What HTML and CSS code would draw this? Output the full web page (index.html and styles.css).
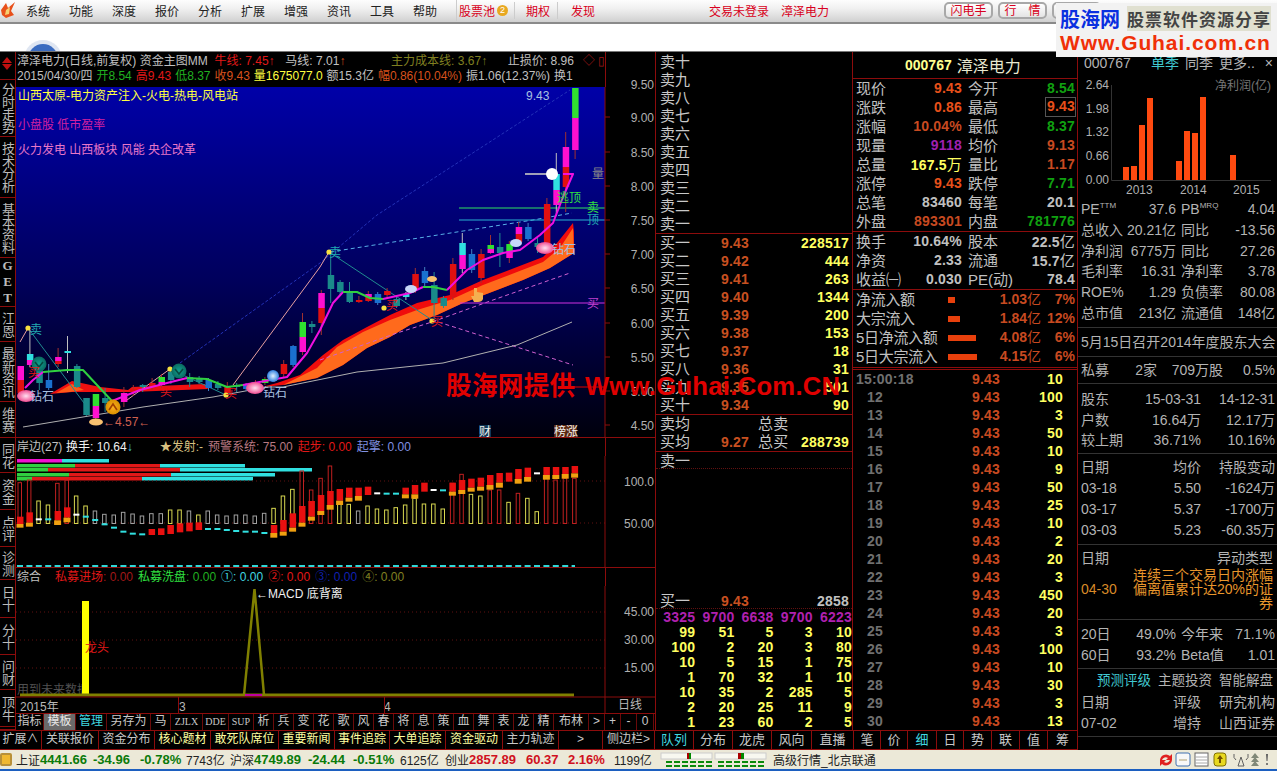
FILE: index.html
```html
<!DOCTYPE html>
<html lang="zh-CN">
<head>
  <meta charset="UTF-8">
  <title>漳泽电力 000767</title>
  <link rel="stylesheet" href="styles.css">
</head>
<body>
<div class="app">

  <div class="menu">
    <svg class="menu-logo" width="16" height="18" viewBox="0 0 16 18"><path d="M1 9 L6 2 L8 7 L15 1 L11 10 L14 14 L6 17 L2 14 Z" fill="#e8501a"/><path d="M6 9 L10 6 L9 13 L5 14 Z" fill="#f8d070"/></svg>
    <div class="menu-items">
      <span>系统</span><span>功能</span><span>深度</span><span>报价</span><span>分析</span><span>扩展</span><span>增强</span><span>资讯</span><span>工具</span><span>帮助</span>
    </div>
    <div class="menu-red">
      <span class="pool">股票池<i class="badge">2</i></span>
      <span class="m1">期权</span>
      <span class="m2">发现</span>
    </div>
    <div class="menu-login"><span>交易未登录</span><span>漳泽电力</span></div>
    <div class="menu-btns"><b>闪电手</b><b>行　情</b><b></b></div>
  </div>

  <div class="toolbar">
    <svg class="globe" width="40" height="11" viewBox="0 0 40 11"><circle cx="20" cy="19" r="19" fill="#dfe6f2"/><circle cx="20" cy="19" r="15" fill="#3b6cc0"/></svg>
  </div>

  <div class="main">
    <div class="left">
      <div class="side">
        <div class="side-top"><i class="up"></i><i class="down"></i></div>
        <div>分时走势</div><div>技术分析</div><div>基本资料</div><div class="get">GET</div><div>江恩</div><div>最新资讯</div><div>维赛</div><div>同花</div><div>资金</div><div>点评</div><div>诊测</div><div>日十</div><div>分十</div><div>问财</div><div>顶牛</div><div></div>
      </div>

      <div class="charts">
        <div class="price-head">
          <div class="head-line">
            <span class="w170">漳泽电力(日线,前复权) 资金主图MM</span>
            <span class="c-red g-a">牛线: 7.45<em>↑</em></span>
            <span class="g-b">马线: 7.01<em class="c-org">↑</em></span>
            <span class="c-olive g-c">主力成本线: 3.67<em>↑</em></span>
            <span class="g-d">止损价: 8.96</span>
            <span class="c-dred g-e">◇ ▯</span>
          </div>
          <div class="head-line line2">
            <span>2015/04/30/四</span>
            <span class="c-green">开8.54</span>
            <span class="c-red">高9.43</span>
            <span class="c-green">低8.37</span>
            <span class="c-org">收9.43</span>
            <span class="c-yel">量1675077.0</span>
            <span>额15.3亿</span>
            <span class="c-org">幅0.86(10.04%)</span>
            <span>振1.06(12.37%)</span>
            <span>换1</span>
          </div>
        </div>

        <svg class="chart price" width="639" height="351" viewBox="16 87 639 351">
          <defs>
            <linearGradient id="sky" x1="0" y1="0" x2="0" y2="1"><stop offset="0" stop-color="#0000a8"/><stop offset=".55" stop-color="#00005c"/><stop offset="1" stop-color="#00000c"/></linearGradient>
            <radialGradient id="gemFill"><stop offset="0" stop-color="#ffe0f0"/><stop offset="1" stop-color="#f04a90"/></radialGradient>
            <radialGradient id="gold"><stop offset="0" stop-color="#ffb020"/><stop offset="1" stop-color="#d89000"/></radialGradient>
            <radialGradient id="tealBall"><stop offset="0" stop-color="#10a090"/><stop offset="1" stop-color="#0a6a60"/></radialGradient>
            <radialGradient id="blueBall"><stop offset="0" stop-color="#e0f0ff"/><stop offset="1" stop-color="#3080e0"/></radialGradient>
            <symbol id="gem" width="18" height="12" viewBox="0 0 18 12" overflow="visible"><ellipse cx="9" cy="5" rx="9" ry="6" fill="url(#gemFill)"/></symbol>
            <symbol id="mark" width="6" height="6" viewBox="0 0 6 6"><circle cx="3" cy="3" r="2.6" fill="#f8e040"/></symbol>
          </defs>
          <rect x="16" y="87" width="589" height="350" fill="url(#sky)"/>
          <g class="ribbons">
            <path fill="#f01010" d="M50 394 L72 381 L100 387 L128 390 L132 387 L205 384 L208 389 L130 392 L95 392 L72 392 Z"/>
            <path fill="#ff5a18" d="M56 393 L72 384 L84 390 L70 392 Z"/>
          </g>
          <path fill="#f00c0c" d="M262 387 L277 383 L300 375 L323 355 L343 340 L367 327 L390 315 L417 303 L450 295 L483 280 L517 267 L543 257 L557 243 L573 223 L574 232 L574 253 L550 268 L523 280 L497 290 L463 303 L437 315 L410 325 L390 337 L367 348 L343 365 L317 378 L283 385 Z"/>
          <path fill="#ff6a1c" d="M287 383 L317 368 L337 347 L363 332 L390 320 L417 310 L450 300 L483 285 L517 272 L543 262 L560 248 L573 228 L574 253 L550 268 L523 280 L497 290 L463 303 L437 315 L410 325 L390 337 L367 348 L343 365 L317 378 L283 385 Z"/>

          <g fill="none" stroke-width="1">
            <polyline stroke="#2432b8" stroke-dasharray="3 2" points="180,363 320,263 377,215 570,90"/>
            <polyline stroke="#e8a0a0" points="233,385 320,267 329,252"/>
            <polyline stroke="#e8a0a0" points="20,342 28,328"/>
            <polyline stroke="#e8a0a0" points="127,400 170,369"/>
            <polyline stroke="#58b0e8" stroke-dasharray="4 3" points="330,252 533,220 572,213"/>
            <polyline stroke="#208c90" points="28,328 87,407"/>
            <polyline stroke="#208c90" points="170,369 226,395"/>
            <polyline stroke="#208c90" points="329,252 432,320"/>
            <polyline stroke="#d060d0" stroke-dasharray="4 3" points="432,320 573,365"/>
            <polyline stroke="#d060d0" stroke-dasharray="4 3" points="320,360 397,333 432,322 493,300 570,273"/>
            <polyline stroke="#b0b0b0" points="23,427 83,417 143,407 213,397 267,387 283,387 357,372 443,363 517,345 572,322"/>
            <line stroke="#30e060" x1="459" y1="208" x2="605" y2="208"/>
            <line stroke="#28b0d0" x1="459" y1="220" x2="605" y2="220"/>
            <line stroke="#d030e0" x1="460" y1="303" x2="605" y2="303"/>
            <line stroke="#e00000" x1="560" y1="387" x2="605" y2="387"/>
          </g>
          <line x1="525" y1="174" x2="553" y2="174" stroke="#a0a0b8" stroke-width="2"/>

          <g id="candles"></g>

          <g fill="none" stroke-width="2" stroke-linejoin="round">
            <polyline stroke="#f010e0" points="25,388 33,380 43,372"/>
            <polyline stroke="#30d040" points="43,372 67,370 83,370 97,385 112,401"/>
            <polyline stroke="#f010e0" points="112,401 140,390 167,383 187,378"/>
            <polyline stroke="#30d040" points="187,378 207,379 227,387 243,385"/>
            <polyline stroke="#f010e0" points="243,385 287,377 307,353 320,330 333,303 343,292"/>
            <polyline stroke="#30d040" points="343,292 357,292 370,298 383,299"/>
            <polyline stroke="#f010e0" points="383,299 410,293 423,287"/>
            <polyline stroke="#30d040" points="423,287 433,287 447,290"/>
            <polyline stroke="#f010e0" points="447,290 467,270 483,260 503,253 520,250 540,235 553,223 563,197 573,174 563,174"/>
          </g>

          <use href="#mark" x="25" y="325"/><use href="#mark" x="167" y="366"/><use href="#mark" x="223" y="392"/>
          <use href="#mark" x="326" y="249"/><use href="#mark" x="429" y="318"/><use href="#mark" x="381" y="305"/>
          <use href="#gem" x="17" y="391"/><use href="#gem" x="246" y="383"/><use href="#gem" x="536" y="243"/>
          <ellipse cx="411" cy="289" rx="6" ry="4" fill="#c8d8f8"/><ellipse cx="516" cy="243" rx="6" ry="4" fill="#c8d8f8"/>
          <circle cx="113" cy="407" r="7.5" fill="url(#gold)"/><path d="M109 410 L113 404 L117 410" stroke="#a04000" stroke-width="1.6" fill="none"/>
          <circle cx="39" cy="364" r="7.5" fill="url(#tealBall)"/><path d="M35 362 L39 367 L43 362" stroke="#064840" stroke-width="1.6" fill="none"/>
          <circle cx="179" cy="371" r="7.5" fill="url(#tealBall)"/><path d="M175 369 L179 374 L183 369" stroke="#064840" stroke-width="1.6" fill="none"/>
          <circle cx="273" cy="376" r="6" fill="url(#blueBall)"/>
          <circle cx="552" cy="174" r="6" fill="#fff"/>
          <ellipse cx="96" cy="422" rx="7" ry="3.5" fill="#f8c070"/>
          <ellipse cx="432" cy="279" rx="5" ry="3" fill="#f8c070"/>
          <path d="M474 288 h3 v4 l6 1 v6 q-1 3 -5 3 h-4 l-3 -6 h3 Z" fill="#f4b050"/>

          <g class="t">
            <text class="c-teal" x="30" y="334">卖</text>
            <text class="c-ice" x="30" y="401">钻石</text>
            <text class="c-ice" x="263" y="397">钻石</text>
            <text class="c-ice" x="552" y="254">钻石</text>
            <text class="c-dim" x="103" y="426">←4.57←</text>
            <text class="c-red" x="160" y="396">买</text>
            <text class="c-red" x="225" y="398">买</text>
            <text class="c-red" x="28" y="377">买</text>
            <text class="c-red" x="386" y="310">买</text>
            <text class="c-red" x="431" y="326">买</text>
            <text class="c-teal" x="329" y="257">卖</text>
            <text class="c-ice" x="526" y="100">9.43</text>
            <text class="c-dim2" x="592" y="178">量</text>
            <text class="c-lime" x="587" y="212">卖</text>
            <text class="c-teal" x="587" y="224">顶</text>
            <text class="c-pur" x="587" y="308">买</text>
            <text class="c-lime" x="557" y="202">逃顶</text>
            <text class="c-yel" x="18" y="100">山西太原-电力资产注入-火电-热电-风电站</text>
            <text class="c-mag" x="18" y="129">小盘股 低市盈率</text>
            <text class="c-pink" x="18" y="154">火力发电 山西板块 风能 央企改革</text>
            <rect x="479" y="425" width="12" height="13" fill="#103858"/><text class="c-white" x="479" y="436">财</text>
            <rect x="554" y="425" width="23" height="13" fill="#5a2810"/><text class="c-white" x="554" y="436">榜涨</text>
          </g>

          <g id="priceAxis" class="t axis"></g>
          <line class="rule" x1="605" y1="87" x2="605" y2="438"/>
          <line class="rule" x1="16" y1="437.5" x2="655" y2="437.5"/>
        </svg>

        <div class="panel-head">
          <span class="i1">岸边(27)</span>
          <span class="c-white">换手: 10.64<em class="c-cyan">↓</em></span>
          <span class="c-sand i2"><em class="c-sand">★</em>发射:-</span>
          <span class="c-rose">预警系统: 75.00</span>
          <span class="c-red">起步: 0.00</span>
          <span class="c-peri">起擎: 0.00</span>
        </div>
        <svg class="chart vol" width="639" height="112" viewBox="16 456 639 112">
          <g id="chips"></g>
          <line class="dots" x1="16" y1="481" x2="605" y2="481"/>
          <line class="dots" x1="16" y1="523" x2="605" y2="523"/>
          <g id="volume"></g>
          <line x1="17" y1="566" x2="575" y2="566" stroke="#30d8d8" stroke-width="2" stroke-dasharray="6 3.4"/>
          <g class="t axis"><text x="654" y="486">100.0</text><text x="654" y="528">50.00</text></g>
          <line class="rule" x1="605" y1="456" x2="605" y2="568"/>
          <line class="rule" x1="16" y1="567.5" x2="655" y2="567.5"/>
        </svg>

        <div class="panel-head head-macd">
          <span class="i1 i3">综合</span>
          <span class="c-red i4">私募进场<i class="c-dred">: 0.00</i></span>
          <span class="c-lime">私募洗盘<i class="c-green">: 0.00</i></span>
          <span class="c-cyan">①: 0.00</span>
          <span class="c-red">②: 0.00</span>
          <span class="c-navy">③: 0.00</span>
          <span class="c-olive">④: 0.00</span>
        </div>
        <svg class="chart macd" width="639" height="128" viewBox="16 586 639 128">
          <line class="dots" x1="16" y1="612" x2="605" y2="612"/>
          <line class="dots" x1="16" y1="640" x2="605" y2="640"/>
          <line class="dots" x1="16" y1="668" x2="605" y2="668"/>
          <g class="t"><text class="c-gray5" x="17" y="694">用到未来数据</text></g>
          <rect x="82" y="601" width="7" height="94" fill="#ffff00"/>
          <polyline points="244,695 254.500,589 264,695" fill="none" stroke="#808000" stroke-width="2.500"/>
          <line x1="20" y1="695" x2="574" y2="695" stroke="#808000" stroke-width="3"/>
          <line x1="245" y1="695" x2="262" y2="695" stroke="#c000a0" stroke-width="2"/>
          <g class="t">
            <text class="c-red" x="85" y="652">龙头</text>
            <text class="c-white" x="256" y="598">←MACD 底背离</text>
          </g>
          <g class="t axis"><text x="654" y="616">45.00</text><text x="654" y="644">30.00</text><text x="654" y="672">15.00</text></g>
          <g class="t c-light"><text x="20" y="711">2015年</text><text x="179" y="711">3</text><text x="384" y="711">4</text><text x="618" y="709">日线</text></g>
          <line class="rule" x1="178.500" y1="697" x2="178.500" y2="714"/>
          <line class="rule" x1="384.500" y1="697" x2="384.500" y2="714"/>
          <line class="rule" x1="605" y1="586" x2="605" y2="714"/>
          <line class="rule" x1="16" y1="697" x2="655" y2="697"/>
          <line class="rule" x1="16" y1="713.500" x2="655" y2="713.500"/>
        </svg>

        <div class="tabs-a">
          <span>指标</span><span class="on-gray">模板</span><span class="c-cyan">管理</span><span>另存为</span><span>马</span><span class="thin">ZJLX</span><span class="thin">DDE</span><span class="thin">SUP</span>
          <span>析</span><span>兵</span><span>变</span><span>花</span><span>歌</span><span>风</span><span>春</span><span>将</span><span>息</span><span>策</span><span>血</span><span>舞</span><span>表</span><span>龙</span><span>精</span>
          <span>布林</span><span>&gt;</span><span>+</span><span>-</span><span>0</span>
        </div>
      </div>
    </div>

    <div class="book">
      <div class="sec">
        <div class="brow"><span>卖十</span></div><div class="brow"><span>卖九</span></div><div class="brow"><span>卖八</span></div><div class="brow"><span>卖七</span></div><div class="brow"><span>卖六</span></div>
        <div class="brow"><span>卖五</span></div><div class="brow"><span>卖四</span></div><div class="brow"><span>卖三</span></div><div class="brow"><span>卖二</span></div><div class="brow"><span>卖一</span></div>
      </div>
      <div class="sec">
        <div class="brow"><span>买一</span><b class="price-c">9.43</b><b class="qty">228517</b></div>
        <div class="brow"><span>买二</span><b class="price-c">9.42</b><b class="qty">444</b></div>
        <div class="brow"><span>买三</span><b class="price-c">9.41</b><b class="qty">263</b></div>
        <div class="brow"><span>买四</span><b class="price-c">9.40</b><b class="qty">1344</b></div>
        <div class="brow"><span>买五</span><b class="price-c">9.39</b><b class="qty">200</b></div>
        <div class="brow"><span>买六</span><b class="price-c">9.38</b><b class="qty">153</b></div>
        <div class="brow"><span>买七</span><b class="price-c">9.37</b><b class="qty">18</b></div>
        <div class="brow"><span>买八</span><b class="price-c">9.36</b><b class="qty">31</b></div>
        <div class="brow"><span>买九</span><b class="price-c">9.35</b><b class="qty">501</b></div>
        <div class="brow"><span>买十</span><b class="price-c">9.34</b><b class="qty">90</b></div>
      </div>
      <div class="sec">
        <div class="brow"><span>卖均</span><b></b><b class="qty sum"><span>总卖</span></b></div>
        <div class="brow"><span>买均</span><b class="price-c">9.27</b><b class="qty sum"><span>总买</span>288739</b></div>
      </div>
      <div class="sec queue-top">
        <div class="brow"><span>卖一</span></div>
      </div>
      <div class="queue">
        <div class="brow"><span>买一</span><b class="price-c">9.43</b><b class="qty c-light">2858</b></div>
        <div class="qgrid q-head"><b>3325</b><b>9700</b><b>6638</b><b>9700</b><b>6223</b></div>
        <div class="qgrid"><b>99</b><b>51</b><b>5</b><b>3</b><b>10</b></div>
        <div class="qgrid"><b>100</b><b>2</b><b>20</b><b>3</b><b>80</b></div>
        <div class="qgrid"><b>10</b><b>5</b><b>15</b><b>1</b><b>75</b></div>
        <div class="qgrid"><b>1</b><b>70</b><b>32</b><b>1</b><b>10</b></div>
        <div class="qgrid"><b>10</b><b>35</b><b>2</b><b>285</b><b>5</b></div>
        <div class="qgrid"><b>2</b><b>20</b><b>25</b><b>11</b><b>9</b></div>
        <div class="qgrid"><b>1</b><b>23</b><b>60</b><b>2</b><b>5</b></div>
      </div>
    </div>

    <div class="quote">
      <div class="q-title"><b>000767</b><span>漳泽电力</span></div>
      <div class="sec8">
        <div class="qrow"><span>现价</span><b class="c-q">9.43</b><span class="l2">今开</span><b class="c-qg">8.54</b></div>
        <div class="qrow"><span>涨跌</span><b class="c-q">0.86</b><span class="l2">最高</span><b class="c-q boxed">9.43</b></div>
        <div class="qrow"><span>涨幅</span><b class="c-q2">10.04%</b><span class="l2">最低</span><b class="c-qg">8.37</b></div>
        <div class="qrow"><span>现量</span><b class="c-qp">9118</b><span class="l2">均价</span><b class="c-q2">9.13</b></div>
        <div class="qrow"><span>总量</span><b class="qty">167.5<i>万</i></b><span class="l2">量比</span><b class="c-q2">1.17</b></div>
        <div class="qrow"><span>涨停</span><b class="c-q">9.43</b><span class="l2">跌停</span><b class="c-qg">7.71</b></div>
        <div class="qrow"><span>总笔</span><b class="c-qw">83460</b><span class="l2">每笔</span><b class="c-qw">20.1</b></div>
        <div class="qrow"><span>外盘</span><b class="c-q2">893301</b><span class="l2">内盘</span><b class="c-qg">781776</b></div>
      </div>
      <div class="sec8">
        <div class="qrow"><span>换手</span><b class="c-qw">10.64%</b><span class="l2">股本</span><b class="c-qw">22.5<i>亿</i></b></div>
        <div class="qrow"><span>净资</span><b class="c-qw">2.33</b><span class="l2">流通</span><b class="c-qw">15.7<i>亿</i></b></div>
        <div class="qrow"><span>收益㈠</span><b class="c-qw">0.030</b><span class="l2">PE(动)</span><b class="c-qw">78.4</b></div>
      </div>
      <div class="sec8 flows">
        <div class="frow"><span>净流入额</span><i class="fbar bar-a"></i><b>1.03<i>亿</i></b><b>7%</b></div>
        <div class="frow"><span>大宗流入</span><i class="fbar bar-b"></i><b>1.84<i>亿</i></b><b>12%</b></div>
        <div class="frow"><span>5日净流入额</span><i class="fbar bar-c"></i><b>4.08<i>亿</i></b><b>6%</b></div>
        <div class="frow"><span>5日大宗流入</span><i class="fbar bar-d"></i><b>4.15<i>亿</i></b><b>6%</b></div>
      </div>
      <div class="ticks">
        <div class="trow"><b class="first">15:00:18</b><b>9.43</b><b>10</b></div>
        <div class="trow"><b>12</b><b>9.43</b><b>100</b></div>
        <div class="trow"><b>13</b><b>9.43</b><b>3</b></div>
        <div class="trow"><b>14</b><b>9.43</b><b>50</b></div>
        <div class="trow"><b>15</b><b>9.43</b><b>10</b></div>
        <div class="trow"><b>16</b><b>9.43</b><b>9</b></div>
        <div class="trow"><b>17</b><b>9.43</b><b>50</b></div>
        <div class="trow"><b>18</b><b>9.43</b><b>25</b></div>
        <div class="trow"><b>19</b><b>9.43</b><b>10</b></div>
        <div class="trow"><b>20</b><b>9.43</b><b>2</b></div>
        <div class="trow"><b>21</b><b>9.43</b><b>20</b></div>
        <div class="trow"><b>22</b><b>9.43</b><b>3</b></div>
        <div class="trow"><b>23</b><b>9.43</b><b>450</b></div>
        <div class="trow"><b>24</b><b>9.43</b><b>20</b></div>
        <div class="trow"><b>25</b><b>9.43</b><b>3</b></div>
        <div class="trow"><b>26</b><b>9.43</b><b>100</b></div>
        <div class="trow"><b>27</b><b>9.43</b><b>10</b></div>
        <div class="trow"><b>28</b><b>9.43</b><b>30</b></div>
        <div class="trow"><b>29</b><b>9.43</b><b>3</b></div>
        <div class="trow"><b>30</b><b>9.43</b><b>13</b></div>
      </div>
    </div>

    <div class="info">
      <div class="info-head"><span class="code">000767</span><span class="c-cyan2">单季</span><span>同季</span><span>更多..</span><span class="close">×</span></div>
      <svg class="profit" width="198" height="127" viewBox="1079 72 198 127">
        <g class="pt">
          <text x="1110" y="89" text-anchor="end">2.64</text><text x="1110" y="113" text-anchor="end">1.98</text><text x="1110" y="136" text-anchor="end">1.32</text><text x="1110" y="160" text-anchor="end">0.66</text><text x="1110" y="184" text-anchor="end">0.00</text>
          <text x="1272" y="90" text-anchor="end" class="dim">净利润(亿)</text>
          <text x="1127" y="194">2013</text><text x="1181" y="194">2014</text><text x="1234" y="194">2015</text>
        </g>
        <path d="M1112.500 85 V180.500 H1272" fill="none" stroke="#333"/>
        <g fill="#ff4a10">
          <rect x="1124" y="167" width="6" height="13"/><rect x="1132" y="166" width="6" height="14"/><rect x="1140" y="125" width="6" height="55"/><rect x="1148" y="98" width="6" height="82"/>
          <rect x="1177" y="161" width="6" height="19"/><rect x="1185" y="131" width="6" height="49"/><rect x="1193" y="133" width="6" height="47"/><rect x="1201" y="97" width="6" height="83"/>
          <rect x="1231" y="155" width="6" height="25"/>
        </g>
      </svg>
      <div class="iblock b-fin">
        <div class="irow"><span>PE<sup>TTM</sup></span><span class="v1">37.6</span><span class="l2">PB<sup>MRQ</sup></span><span class="v2">4.04</span></div>
        <div class="irow"><span>总收入</span><span class="v1">20.21亿</span><span class="l2">同比</span><span class="v2">-13.56</span></div>
        <div class="irow"><span>净利润</span><span class="v1">6775万</span><span class="l2">同比</span><span class="v2">27.26</span></div>
        <div class="irow"><span>毛利率</span><span class="v1">16.31</span><span class="l2">净利率</span><span class="v2">3.78</span></div>
        <div class="irow"><span>ROE%</span><span class="v1">1.29</span><span class="l2">负债率</span><span class="v2">80.08</span></div>
        <div class="irow"><span>总市值</span><span class="v1">213亿</span><span class="l2">流通值</span><span class="v2">148亿</span></div>
      </div>
      <div class="iblock b-one">5月15日召开2014年度股东大会</div>
      <div class="iblock b-fund"><span>私募</span><span>2家</span><span>709万股</span><span>0.5%</span></div>
      <div class="iblock b-holder">
        <div class="row3"><span>股东</span><span>15-03-31</span><span>14-12-31</span></div>
        <div class="row3"><span>户数</span><span>16.64万</span><span>12.17万</span></div>
        <div class="row3"><span>较上期</span><span>36.71%</span><span>10.16%</span></div>
      </div>
      <div class="iblock b-trade">
        <div class="row3"><span>日期</span><span>均价</span><span>持股变动</span></div>
        <div class="row3"><span>03-18</span><span>5.50</span><span>-1624万</span></div>
        <div class="row3"><span>03-17</span><span>5.37</span><span>-1700万</span></div>
        <div class="row3"><span>03-03</span><span>5.23</span><span>-60.35万</span></div>
      </div>
      <div class="iblock b-move">
        <div class="row2"><span>日期</span><span>异动类型</span></div>
        <div class="move-body"><span>04-30</span><p>连续三个交易日内涨幅偏离值累计达20%的证券</p></div>
      </div>
      <div class="iblock b-rate">
        <div class="irow"><span>20日</span><span class="v1">49.0%</span><span class="l2">今年来</span><span class="v2">71.1%</span></div>
        <div class="irow"><span>60日</span><span class="v1">93.2%</span><span class="l2">Beta值</span><span class="v2">1.01</span></div>
      </div>
      <div class="iblock b-fore">
        <div class="fore-tabs"><span class="c-cyan2">预测评级</span><span>主题投资</span><span>智能解盘</span></div>
        <div class="row3"><span>日期</span><span>评级</span><span>研究机构</span></div>
        <div class="row3"><span>07-02</span><span>增持</span><span>山西证券</span></div>
      </div>
    </div>

    <div class="tabs-b">
      <span>扩展∧</span><span>关联报价</span><span>资金分布</span><span class="c-yel2">核心题材</span><span class="c-yel2">敢死队席位</span><span class="c-yel2">重要新闻</span><span class="c-yel2">事件追踪</span><span class="c-yel2">大单追踪</span><span class="c-yel2">资金驱动</span><span>主力轨迹</span><span>&gt;</span><span>侧边栏&gt;</span>
    </div>
    <div class="tabs-c">
      <span class="c-cyan">队列</span><span>分布</span><span>龙虎</span><span>风向</span><span>直播</span><span>笔</span><span>价</span><span class="c-cyan">细</span><span>日</span><span>势</span><span>联</span><span>值</span><span>筹</span>
    </div>
  </div>

  <div class="status">
    <div class="index">
      <i class="st-icon"></i><span>上证</span><b class="g">4441.66</b><b class="g">-34.96</b><b class="g">-0.78%</b><span>7743亿</span>
      <span>沪深</span><b class="g">4749.89</b><b class="g">-24.44</b><b class="g">-0.51%</b><span>6125亿</span>
      <span>创业</span><b class="r">2857.89</b><b class="r">60.37</b><b class="r">2.16%</b><span>1199亿</span>
    </div>
    <svg class="ticker" width="108" height="18" viewBox="0 0 108 18">
      <rect x="1" y="2" width="51" height="6" fill="#f8f8f0" stroke="#ccc"/><rect x="55" y="2" width="51" height="6" fill="#f8f8f0" stroke="#ccc"/>
      <rect x="27" y="2" width="2" height="6" fill="#a00"/><rect x="29" y="2" width="2" height="6" fill="#080"/>
      <rect x="78" y="2" width="3" height="6" fill="#a00"/><rect x="81" y="2" width="3" height="6" fill="#080"/>
      <g stroke="#0a8a0a" stroke-width="2" stroke-dasharray="6 2"><line x1="6" y1="11" x2="52" y2="11"/><line x1="6" y1="15" x2="52" y2="15"/><line x1="58" y1="11" x2="106" y2="11"/><line x1="58" y1="15" x2="106" y2="15"/></g>
    </svg>
    <span class="feed">高级行情_北京联通</span>
    <svg class="tray" width="115" height="18" viewBox="0 0 115 18">
      <path d="M2 9 a6 6 0 0 1 10 -4 l2 -2 v6 h-6 l2 -2 a4 4 0 0 0 -6 2 Z M14 9 a6 6 0 0 1 -10 4 l-2 2 v-6 h6 l-2 2 a4 4 0 0 0 6 -2 Z" fill="#e02020"/>
      <rect x="18" y="2" width="14" height="13" rx="2" fill="#f8f8f8" stroke="#4070b0"/><line x1="21" y1="9" x2="29" y2="9" stroke="#b0a070"/>
      <rect x="37" y="2" width="13" height="13" fill="#fff" stroke="#666"/><path d="M37 6 H50 M37 9 H50 M37 12 H50" stroke="#aaa"/>
      <rect x="56" y="2" width="12" height="13" rx="3" fill="#e8d820" stroke="#807000"/><path d="M62 4 l3 4 h-2 v4 h-2 v-4 h-2 Z" fill="#705000"/>
      <path d="M80 15 h6 l-3 -9 Z M76 3 q-1 4 2 6 M90 3 q1 4 -2 6" fill="none" stroke="#606060"/>
      <path d="M97 2 l4 5 h-8 Z M97 6 l4 5 h-8 Z M97 10 l4 5 h-8 Z" fill="#808878"/>
      <path d="M108 3 h2 l-.5 7 h-1 Z M108.200 12 h1.600 v2 h-1.600 Z" fill="#606060"/>
    </svg>
  </div>

  <div class="mark-over">股海网提供 Www.Guhai.Com.CN</div>
  <div class="brand">
    <div class="brand-top"><b>股海网</b><span>股票软件资源分享</span></div>
    <div class="brand-url">Www.Guhai.com.cn</div>
  </div>
</div>
<script src="chart.js"></script>
</body>
</html>
```

FILE: styles.css
```css
* {
  box-sizing: border-box;
}
body {
  margin: 0;
  background: #000;
  font-family: "Liberation Sans", "Noto Sans CJK SC", sans-serif;
  font-size: 12px;
  color: #c0c0c0;
  overflow: hidden;
}
em, i {
  font-style: normal;
}
.app {
  position: relative;
  width: 1277px;
  height: 771px;
  overflow: hidden;
}

/* 顶部菜单 */
.menu {
  height: 24px;
  display: flex;
  align-items: center;
  position: relative;
  color: #222;
  padding-bottom: 2px;
  background: linear-gradient(#fdfdfd, #f0f0f0 40%, #d0d0d0);
  border-bottom: 2px solid #8a8a8a;
}
.menu-logo {
  flex: none;
}
.menu-items {
  display: grid;
  grid-template-columns: repeat(10, 43px);
  margin-left: 10px;
  width: 430px;
  text-align: left;
}
.menu-red {
  display: flex;
  height: 22px;
  align-items: center;
  color: #d80020;
  border-left: 1px solid #ccc;
  padding-left: 2px;
}
.menu-red .pool {
  width: 56px;
  display: flex;
  align-items: center;
  gap: 2px;
  border-right: 1px solid #ccc;
}
.badge {
  width: 11px;
  height: 11px;
  border-radius: 50%;
  background: #e8a820;
  color: #fff;
  font-size: 9px;
  line-height: 11px;
  text-align: center;
}
.m1 {
  margin-left: 11px;
  width: 32px;
  border-right: 1px solid #ccc;
}
.m2 {
  margin-left: 13px;
  width: 37px;
}
.menu-login {
  display: flex;
  gap: 12px;
  color: #d80020;
  margin-left: 101px;
}
.menu-btns {
  display: flex;
  gap: 5px;
  margin-left: 115px;
}
.menu-btns b {
  width: 49px;
  height: 17px;
  font-weight: normal;
  color: #d80020;
  text-align: center;
  line-height: 14px;
  border: 2px solid #a8a8a8;
  border-radius: 5px;
  background: linear-gradient(#fff, #e4e4e4);
}
.toolbar {
  height: 28px;
  background: #fff;
  border-bottom: 1px solid #777;
  position: relative;
  overflow: hidden;
}
.globe {
  position: absolute;
  left: 23px;
  top: 16px;
}

/* 主体 */
.main {
  display: grid;
  grid-template-columns: 655px 198px 225px 199px;
  grid-template-rows: 678px 20px;
  height: 698px;
  background: #000;
}
.left {
  display: flex;
}
.side {
  width: 16px;
  height: 678px;
  display: grid;
  grid-template-rows: 28px 57px 61px 60px 49px 35px 60px 36px 35px 37px 37px 33px 38px 37px 35px 37px 3px;
  border-right: 1px solid #8c0c0c;
  font-size: 13px;
  color: #bbb;
}
.side > div {
  writing-mode: vertical-rl;
  text-orientation: upright;
  text-align: center;
  line-height: 15px;
  letter-spacing: -.5px;
  border-bottom: 1px solid #8c0c0c;
  overflow: hidden;
}
.side .side-top {
  writing-mode: horizontal-tb;
  padding: 5px 0 0 2px;
}
.side .get {
  font-family: "Liberation Serif", serif;
  font-weight: bold;
  letter-spacing: 1px;
}
.side-top i {
  display: block;
  width: 0;
  border: 5px solid transparent;
  margin-bottom: 1px;
}
.side-top .up {
  border-top-width: 0;
  border-bottom: 6px solid #c01010;
}
.side-top .down {
  border-bottom-width: 0;
  border-top: 6px solid #c01010;
}
.charts {
  width: 639px;
  display: flex;
  flex-direction: column;
}
.chart {
  display: block;
  flex: none;
}
.chart.price {
  overflow: visible;
}
.price-head {
  height: 35px;
  width: 590px;
  padding: 2px 0 0 1px;
  border-right: 1px solid #8c0c0c;
  white-space: nowrap;
}
.head-line {
  display: flex;
  height: 15px;
  line-height: 15px;
}
.line2 {
  gap: 4px;
}
.w170 {
  width: 198px;
}
.g-a {
  width: 71px;
}
.g-b {
  width: 106px;
}
.g-c {
  width: 117px;
}
.g-d {
  width: 75px;
}
.panel-head {
  height: 18px;
  width: 590px;
  display: flex;
  gap: 5px;
  line-height: 18px;
  white-space: nowrap;
  border-right: 1px solid #8c0c0c;
}
.i1 {
  margin-left: 1px;
  width: 44px;
}
.i2 {
  margin-left: 22px;
}
.i3 {
  width: 33px;
}
.tabs-a {
  height: 16px;
  display: grid;
  grid-template-columns: 28px 32px 31px 44px 20px 32px 26px 25px repeat(15, 20px) 35px 16px 16px 16px 17px;
  text-align: center;
  line-height: 15px;
  color: #c8c8c8;
}
.tabs-a span {
  border-right: 1px solid #6a0a0a;
}
.tabs-a .on-gray {
  background: #6a6a6a;
  color: #e8e8e8;
}
.tabs-a .thin {
  font-family: "Liberation Serif", serif;
  font-size: 10px;
}
.tabs-b, .tabs-c {
  display: grid;
  align-items: stretch;
  text-align: center;
  line-height: 17px;
  color: #c8c8c8;
  border-top: 1px solid #8c0c0c;
  border-bottom: 1px solid #8c0c0c;
}
.tabs-b {
  grid-template-columns: 42px 57px 56px 56px 68px 56px 55px 56px 57px 56px 44px 52px;
}
.tabs-b span, .tabs-c span {
  border-right: 1px solid #8c0c0c;
}
.tabs-c {
  grid-column: 2 / 4;
  grid-template-columns: 39px 39px 39px 40px 42px 27px 27px 29px 27px 28px 28px 28px 30px;
  font-size: 13px;
}

/* svg 文字 */
.t text, text.t {
  font-size: 12px;
}
.t text {
  fill: currentColor;
}
.axis {
  color: #b0b0b0;
  text-anchor: end;
}
.rule {
  stroke: #8c0c0c;
  stroke-width: 1;
}
.dots {
  stroke: #601010;
  stroke-dasharray: 1 3;
}

/* 颜色 */
.c-red { color: #e01818; }
.c-dred { color: #a01818; }
.c-org { color: #d8521c; }
.c-olive { color: #808020; }
.c-green { color: #20b020; }
.c-lime { color: #30e040; }
.c-yel { color: #ffff40; }
.c-yel2 { color: #ffffa0; }
.c-teal { color: #20a8b0; }
.c-cyan { color: #40d8e0; }
.c-cyan2 { color: #40c8d0; }
.c-ice { color: #a8c0e0; }
.c-dim { color: #d06050; }
.c-dim2 { color: #888; }
.c-pur { color: #c040d0; }
.c-mag { color: #d020a0; }
.c-pink { color: #e878c8; }
.c-white { color: #f0f0f0; }
.c-sand { color: #d8c080; }
.c-rose { color: #b87880; }
.c-peri { color: #8090e0; }
.c-navy { color: #1020b0; }
.c-gray5 { color: #505050; }
.c-light { color: #b8b8b8; }

/* 买卖盘 */
.book {
  border-left: 1px solid #8c0c0c;
  border-right: 1px solid #8c0c0c;
  padding-top: 1px;
  display: flex;
  flex-direction: column;
}
.sec {
  border-bottom: 1px solid #8c0c0c;
}
.queue-top {
  flex: 1;
  border-bottom: none;
}
.queue-top .brow {
  border-bottom: 1px dotted #601010;
  height: 17px;
}
.brow {
  height: 18px;
  line-height: 18px;
  display: grid;
  grid-template-columns: 35px 54px 100px;
  padding-left: 4px;
  font-size: 15px;
  color: #c8c8c8;
}
.brow b, .qgrid b, .qrow b, .trow b {
  font-size: 14px;
  letter-spacing: .2px;
  text-align: right;
}
.price-c {
  color: #c85020;
}
.qty {
  color: #ffff60;
}
.sum {
  display: flex;
  justify-content: space-between;
  padding-left: 9px;
}
.sum span {
  font-size: 15px;
  font-weight: normal;
  color: #c8c8c8;
}
.queue {
  height: 138px;
}
.queue .brow {
  height: 17px;
  border-bottom: 1px dotted #601010;
}
.queue .brow .qty {
  color: #c0c0c0;
}
.qgrid {
  display: grid;
  grid-template-columns: repeat(5, 39.200px);
  height: 15px;
  line-height: 15px;
  color: #ffff60;
}
.q-head {
  height: 16px;
  line-height: 16px;
  color: #b020b0;
}

/* 报价 */
.quote {
  display: flex;
  flex-direction: column;
  border-right: 1px solid #8c0c0c;
}
.q-title {
  height: 28px;
  display: flex;
  gap: 5px;
  padding-left: 52px;
  align-items: center;
  border-bottom: 1px solid #8c0c0c;
  font-size: 16px;
  color: #e8e8d0;
}
.q-title b {
  font-size: 14px;
  color: #ffff90;
}
.sec8 {
  border-bottom: 1px solid #8c0c0c;
}
.qrow {
  height: 19px;
  line-height: 19px;
  display: grid;
  grid-template-columns: 33px 73px 43px 70px;
  padding-left: 3px;
  font-size: 15px;
  color: #c0c0c0;
}
.qrow .l2 {
  padding-left: 6px;
  white-space: nowrap;
}
.qrow i {
  font-weight: normal;
  font-size: 15px;
}
.qrow .qty {
  white-space: nowrap;
}
.qrow span:first-child {
  white-space: nowrap;
}
.c-q { color: #e8501a; }
.c-q2 { color: #c84a20; }
.c-qg { color: #10a010; }
.c-qp { color: #a020b0; }
.c-qw { color: #c0c0c0; }
.boxed {
  outline: 1px solid #555;
  width: 29px;
  justify-self: end;
  height: 18px;
  line-height: 17px;
}
.flows {
  border-bottom: 3px double #8c0c0c;
  height: 81px;
}
.frow {
  height: 19px;
  line-height: 19px;
  display: grid;
  grid-template-columns: 92px 1fr auto 34px;
  padding-left: 3px;
  align-items: center;
  font-size: 15px;
  white-space: nowrap;
  padding-right: 2px;
}
.frow span {
  letter-spacing: -.3px;
}
.frow b {
  font-size: 14px;
  color: #c84a20;
  text-align: right;
}
.frow b i {
  font-weight: normal;
}
.fbar {
  display: block;
  height: 6px;
  background: #e8400c;
}
.bar-a { width: 7px; }
.bar-b { width: 12px; }
.bar-c { width: 28px; }
.bar-d { width: 29px; }
.ticks {
  flex: 1;
}
.trow {
  height: 18px;
  line-height: 18px;
  display: grid;
  grid-template-columns: 56px 88px 63px;
  padding-left: 3px;
}
.trow b:nth-child(1) {
  color: #707070;
  padding-right: 29px;
}
.trow .first {
  color: #a8a8a8;
  padding-right: 0;
  text-align: left;
  white-space: nowrap;
}
.trow b:nth-child(2) {
  color: #c84a20;
}
.trow b:nth-child(3) {
  color: #ffff60;
}

/* 右侧资料 */
.info {
  grid-row: 1 / 3;
  grid-column: 4;
  font-size: 14px;
  color: #b4b4b4;
  display: flex;
  flex-direction: column;
  padding-top: 2px;
}
.info-head {
  height: 18px;
  display: flex;
  padding: 0 4px 0 6px;
  line-height: 18px;
  gap: 6px;
  white-space: nowrap;
}
.info-head .code {
  width: 61px;
}
.info-head .close {
  margin-left: auto;
}
.profit {
  display: block;
  flex: none;
}
.pt text {
  font-size: 12px;
  fill: #b0b0b0;
}
.pt .dim {
  fill: #777;
}
.iblock {
  padding: 0 4px 0 3px;
  border-bottom: 1px solid #333;
}
.irow {
  height: 20.800px;
  line-height: 20.800px;
  display: grid;
  grid-template-columns: 46px 49px 46px 53px;
  white-space: nowrap;
}
.irow .v1, .irow .v2 {
  text-align: right;
}
.irow .l2 {
  padding-left: 5px;
}
sup {
  font-size: 8px;
  line-height: 0;
  vertical-align: 6px;
}
.b-fin {
  height: 129px;
}
.b-one {
  height: 29px;
  line-height: 28px;
  white-space: nowrap;
  padding-right: 0;
}
.b-fund {
  height: 27px;
  line-height: 26px;
  display: grid;
  grid-template-columns: 36px 40px 66px 52px;
  text-align: right;
}
.b-fund span:first-child {
  text-align: left;
}
.b-holder {
  height: 70px;
  padding-top: 5px;
}
.row3 {
  height: 20.500px;
  line-height: 20.500px;
  display: grid;
  grid-template-columns: 50px 70px 74px;
  text-align: right;
}
.row3 span:first-child, .row2 span:first-child {
  text-align: left;
}
.b-trade {
  height: 91px;
  padding-top: 3px;
}
.b-trade .row3 {
  height: 21px;
  line-height: 21px;
}
.b-move {
  height: 75px;
  padding-top: 3px;
}
.row2 {
  display: flex;
  justify-content: space-between;
  height: 20px;
  line-height: 20px;
}
.move-body {
  display: flex;
  align-items: center;
  color: #d88a28;
}
.move-body span {
  width: 46px;
  flex: none;
}
.move-body p {
  margin: 0;
  width: 148px;
  font-size: 14px;
  line-height: 14px;
  text-align: right;
  color: #e8962c;
}
.b-rate {
  height: 49px;
  padding-top: 4px;
}
.b-fore {
  height: 68px;
  padding-top: 1px;
}
.fore-tabs {
  display: flex;
  justify-content: flex-end;
  gap: 7px;
  height: 22px;
  line-height: 22px;
  font-size: 13.500px;
}

/* 状态栏 */
.status {
  height: 21px;
  display: flex;
  align-items: center;
  background: #ece9d8;
  color: #222;
  border-bottom: 2px solid #1c5fc0;
  white-space: nowrap;
}
.index {
  display: grid;
  grid-template-columns: 16px 24px 53px 47px 46px 44px 24px 54px 45px 47px 45px 24px 57px 42px 46px 46px;
  align-items: center;
  font-size: 12px;
}
.index b {
  font-size: 13px;
}
.g { color: #0a7a0a; }
.r { color: #d01020; }
.st-icon {
  display: block;
  width: 12px;
  height: 13px;
  background: #f0b830;
  border: 2px solid #b89038;
  border-radius: 2px;
}
.ticker {
  flex: none;
}
.feed {
  margin-left: 5px;
  font-size: 12px;
}
.tray {
  margin-left: auto;
  margin-right: 4px;
}

/* 水印 */
.mark-over {
  position: absolute;
  left: 446px;
  top: 370px;
  font-size: 25.600px;
  font-weight: bold;
  line-height: 32px;
  letter-spacing: .3px;
  word-spacing: 2px;
  color: #e00000;
  white-space: nowrap;
}
.brand {
  position: absolute;
  left: 1056px;
  top: 3px;
  width: 221px;
  height: 54px;
  background: #f2f2f2;
  padding: 3px 0 0 4px;
}
.brand-top {
  display: flex;
  align-items: center;
  gap: 7px;
  height: 25px;
}
.brand-top b {
  font-size: 20px;
  color: #0a30e0;
}
.brand-top span {
  font-size: 17px;
  font-weight: bold;
  color: #444;
  background: #e0e0d0;
  white-space: nowrap;
  letter-spacing: 1px;
}
.brand-url {
  font-size: 21px;
  font-weight: bold;
  color: #f03008;
  line-height: 24px;
  letter-spacing: .9px;
  white-space: nowrap;
}
```

FILE: chart.js
```js
// 画K线、成交量、价格刻度
const NS = 'http://www.w3.org/2000/svg';
const colors = { t: '#1a8a8a', b: '#1a70d0', r: '#e01010', m: '#ff10d0', g: '#30e030', c: '#30e0e0' };
const wickColors = { t: '#208c90', b: '#4080c0', r: '#a03030', m: '#a03030', g: '#a03030', c: '#c0c0c0' };

function add(parent, tag, attrs) {
  const el = document.createElementNS(NS, tag);
  for (const k in attrs) el.setAttribute(k, attrs[k]);
  parent.appendChild(el);
  return el;
}

const xOf = i => 20.5 + 9.4 * i;

// [上影, 下影, 实体顶, 分色, 实体底, 上色, 下色]
const candles = [
  [366, 393, 366, 380, 393, 'm', 'r'],
  [330, 367, 354, 360, 365, 'c', 'm'],
  [359, 390, 365, 365, 383, 't', 't'],
  [364, 390, 380, 380, 388, 'b', 'b'],
  [348, 367, 357, 361, 364, 'm', 'r'],
  [336, 373, 351, 351, 353, 'c', 'c'],
  [364, 388, 366, 366, 387, 't', 't'],
  [398, 416, 398, 398, 415, 't', 't'],
  [394, 420, 394, 406, 418, 'g', 'm'],
  [388, 412, 398, 398, 403, 't', 't'],
  [400, 412, 402, 402, 408, 'g', 'g'],
  [387, 407, 393, 393, 402, 'm', 'm'],
  [385, 396, 389, 389, 392, 'r', 'r'],
  [384, 392, 385, 385, 387, 't', 't'],
  [378, 390, 383, 383, 388, 'r', 'r'],
  [374, 388, 377, 382, 385, 'g', 'm'],
  [368, 384, 372, 372, 380, 't', 't'],
  [366, 376, 368, 368, 372, 't', 't'],
  [373, 387, 377, 377, 382, 't', 't'],
  [376, 384, 379, 379, 382, 't', 't'],
  [378, 391, 380, 380, 388, 'b', 'b'],
  [381, 390, 384, 384, 388, 't', 't'],
  [382, 395, 386, 386, 393, 'r', 'r'],
  [383, 392, 385, 385, 387, 't', 't'],
  [383, 391, 385, 385, 389, 'b', 'b'],
  [380, 388, 382, 382, 385, 'g', 'g'],
  [377, 385, 379, 379, 383, 'g', 'g'],
  [372, 382, 375, 375, 380, 'r', 'r'],
  [360, 377, 364, 364, 374, 'r', 'r'],
  [345, 367, 346, 346, 365, 'b', 'b'],
  [313, 355, 322, 337, 352, 'g', 'm'],
  [321, 333, 324, 324, 327, 't', 't'],
  [290, 335, 293, 308, 323, 'm', 'r'],
  [253, 303, 275, 275, 289, 't', 't'],
  [280, 295, 282, 282, 292, 't', 't'],
  [282, 303, 292, 292, 302, 't', 't'],
  [296, 303, 300, 300, 302, 'r', 'r'],
  [291, 302, 294, 297, 301, 'm', 'r'],
  [292, 305, 294, 294, 303, 'b', 'b'],
  [288, 298, 291, 291, 295, 'r', 'r'],
  [296, 308, 299, 299, 306, 't', 't'],
  [292, 300, 294, 294, 297, 'c', 'c'],
  [268, 293, 274, 274, 289, 'r', 'r'],
  [267, 287, 271, 271, 283, 'b', 'b'],
  [272, 320, 285, 285, 303, 't', 't'],
  [296, 308, 298, 298, 306, 't', 't'],
  [258, 300, 264, 264, 297, 'r', 'r'],
  [233, 273, 243, 255, 269, 'c', 'm'],
  [249, 273, 254, 254, 270, 'b', 'b'],
  [249, 283, 254, 254, 278, 'r', 'r'],
  [235, 254, 245, 249, 253, 'g', 'm'],
  [233, 267, 247, 247, 253, 't', 't'],
  [241, 263, 244, 251, 258, 'g', 'm'],
  [222, 244, 227, 234, 242, 'm', 'r'],
  [223, 241, 227, 227, 239, 'b', 'b'],
  [238, 253, 243, 243, 247, 't', 't'],
  [198, 248, 204, 204, 247, 'r', 'r'],
  [153, 216, 174, 190, 205, 'c', 'm'],
  [132, 212, 147, 167, 187, 'm', 'r'],
  [88, 159, 88, 118, 150, 'g', 'm']
];

const cg = document.getElementById('candles');
candles.forEach((c, i) => {
  const x = xOf(i);
  add(cg, 'line', { x1: x, x2: x, y1: c[0], y2: c[1], stroke: wickColors[c[5]] });
  add(cg, 'rect', { x: x - 3, y: c[2], width: 6.5, height: c[3] - c[2], fill: colors[c[5]] });
  add(cg, 'rect', { x: x - 3, y: c[3], width: 6.5, height: c[4] - c[3], fill: colors[c[6]] });
});

// 价格刻度
const axis = document.getElementById('priceAxis');
[[9.5, 84], [9, 117], [8.5, 152], [8, 186], [7.5, 220], [7, 254], [6.5, 288], [6, 323], [5.5, 357], [5, 391], [4.5, 425]].forEach(p => {
  add(axis, 'text', { x: 654, y: p[1] + 5 }).textContent = p[0].toFixed(2);
  if (p[1] > 88) add(axis, 'line', { x1: 605, x2: 610, y1: p[1], y2: p[1], stroke: '#8c0c0c' });
});

// 筹码条
const chips = document.getElementById('chips');
[[459, 17, [['#f010d0', 62], ['#30e0e0', 109]]],
 [464, 17, [['#30d040', 75], ['#e01818', 160], ['#30e0e0', 245]]],
 [468, 17, [['#30d040', 48], ['#e01818', 180], ['#30e0e0', 312]]],
 [473, 17, [['#30d040', 69], ['#e01818', 171], ['#30e0e0', 275]]],
 [477, 17, [['#30d040', 32], ['#e01818', 142], ['#30e0e0', 253]]]].forEach(row => {
  let from = row[1];
  row[2].forEach(s => {
    add(chips, 'rect', { x: from, y: row[0], width: s[1] - from, height: 3.5, fill: s[0] });
    from = s[1];
  });
});

// 成交量: [颜色, 柱顶, 红块顶, 红块底, 橙块底] 或 [颜色, 柱顶, 短线y, 短线色]
const zy = v => 435 + v / 3;
const R = '#c02020', Y = '#d8d850', G = '#a0a0a0';
const WH = '#ffffff', CY = '#30e0e0';
const bars = [
  [R, 143, 245, 267, 278], [R, 135, 232, 263, 275], [Y, 198, 250, WH], [Y, 210, 250, CY],
  [R, 145, 228, 256, 270], [R, 135, 217, 248, 262], [Y, 183, 236, WH], [Y, 213, 242, CY],
  [G, 228, 252, CY], [G, 238, 265, CY], [G, 240, 275, CY], [G, 232, 287, CY], [G, 237, 293, CY], [G, 243, 295, CY],
  [G, 236, 282, 300, 0], [G, 236, 280, 300, 0], [Y, 225, 270, 297, 0], [Y, 225, 265, 292, 0], [G, 228, 263, 289, 0], [Y, 240, 262, 285, 0],
  [G, 228, 279, CY], [G, 240, 279, CY], [G, 243, 282, CY], [G, 240, 285, CY], [G, 240, 287, CY], [G, 243, 287, CY], [G, 235, 291, CY],
  [Y, 220, 270, 294, 308], [Y, 183, 255, 290, 302], [Y, 163, 235, 278, 290], [R, 108, 213, 263, 275], [R, 165, 198, 245, 257],
  [R, 130, 180, 228, 240], [R, 93, 168, 210, 224], [Y, 205, 162, 197, 210], [Y, 208, 158, 188, 200], [G, 228, 158, 183, 197], [Y, 213, 155, 180, 0],
  [Y, 222, 172, WH], [Y, 225, 173, CY], [Y, 218, 173, CY], [Y, 210, 158, 178, 190], [Y, 190, 150, 178, 191], [Y, 207, 143, 170, 0],
  [Y, 207, 162, WH], [Y, 222, 163, CY], [R, 145, 143, 170, 182], [R, 118, 135, 165, 177], [Y, 178, 131, 158, 170], [Y, 183, 128, 155, 167],
  [R, 165, 120, 150, 164], [R, 165, 114, 143, 158], [Y, 202, 113, 140, 0], [R, 175, 102, 132, 146], [Y, 190, 98, 126, 140], [Y, 230, 112, WH],
  [R, 130, 96, 120, 134], [R, 135, 96, 120, 132], [R, 130, 96, 117, 131], [R, 130, 93, 115, 128]
];
const vol = document.getElementById('volume');
const base = 523.5;
bars.forEach((b, i) => {
  const x = xOf(i) - 0.5;
  const top = Math.min(zy(b[1]), base);
  add(vol, 'rect', { x: x - 2, y: top, width: 3.5, height: base - top, fill: 'none', stroke: b[0] });
  if (typeof b[3] === 'string') {
    add(vol, 'rect', { x: x - 3, y: zy(b[2]), width: 6, height: 2, fill: b[3] });
  } else {
    add(vol, 'rect', { x: x - 3, y: zy(b[2]), width: 6.5, height: zy(b[3]) - zy(b[2]), fill: '#e81010' });
    if (b[4]) add(vol, 'rect', { x: x - 3.5, y: zy(b[3]), width: 7, height: zy(b[4]) - zy(b[3]), fill: '#f0a010' });
  }
});
```
